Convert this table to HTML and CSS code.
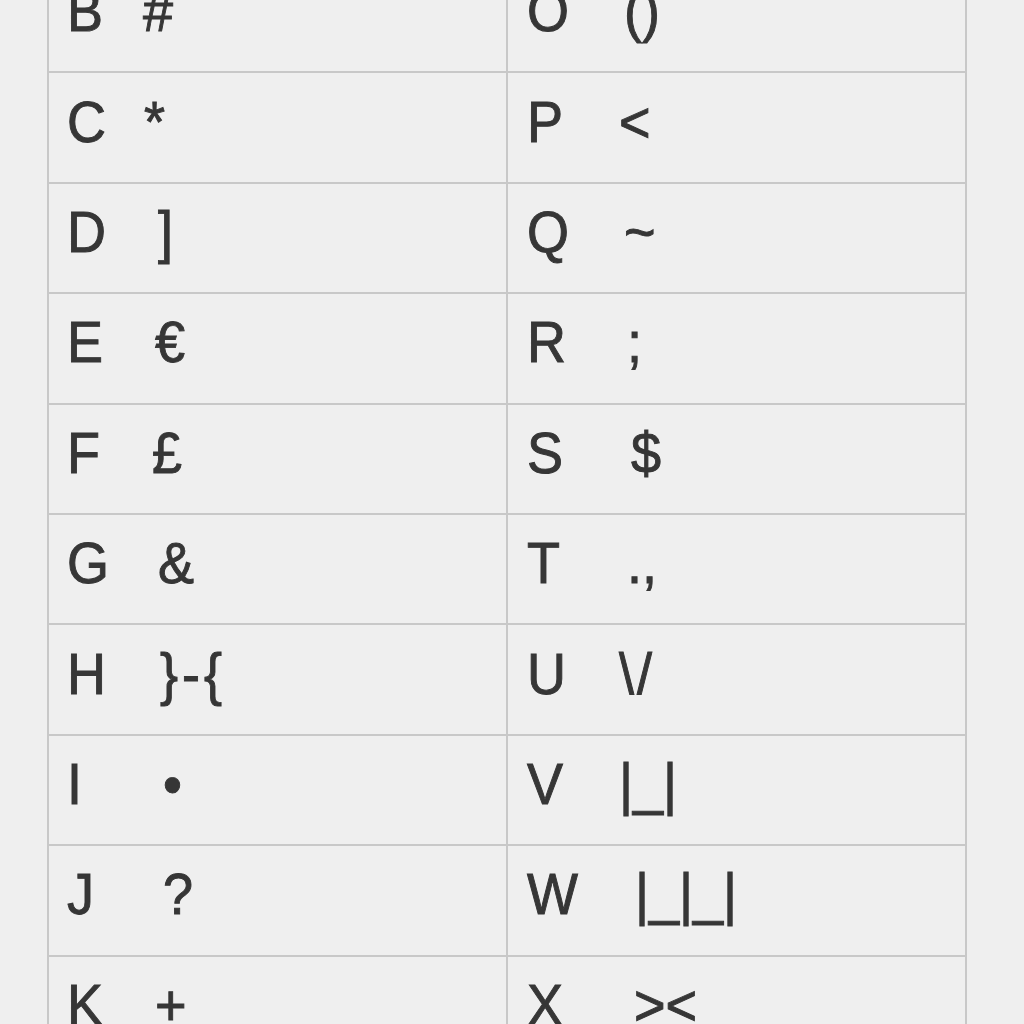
FILE: index.html
```html
<!DOCTYPE html>
<html>
<head>
<meta charset="utf-8">
<link rel="stylesheet" href="styles.css">
</head>
<body>
<div class="page">
  <table class="chart">
    <tr><td><span class="c"><span class="l">B</span><span class="s m-12">#</span></span></td><td><span class="c"><span class="l">O</span><span class="s m5">()</span></span></td></tr>
    <tr><td><span class="c"><span class="l">C</span><span class="s m-11">*</span></span></td><td><span class="c"><span class="l">P</span><span class="s">&lt;</span></span></td></tr>
    <tr><td><span class="c"><span class="l">D</span><span class="s m3">]</span></span></td><td><span class="c"><span class="l">Q</span><span class="s m5">~</span></span></td></tr>
    <tr><td><span class="c"><span class="l">E</span><span class="s">€</span></span></td><td><span class="c"><span class="l">R</span><span class="s m8">;</span></span></td></tr>
    <tr><td><span class="c"><span class="l">F</span><span class="s m-3">£</span></span></td><td><span class="c"><span class="l">S</span><span class="s m12">$</span></span></td></tr>
    <tr><td><span class="c"><span class="l">G</span><span class="s m3">&amp;</span></span></td><td><span class="c"><span class="l">T</span><span class="s m8">.,</span></span></td></tr>
    <tr><td><span class="c"><span class="l">H</span><span class="s m5 wide">}-{</span></span></td><td><span class="c"><span class="l">U</span><span class="s wide2">\/</span></span></td></tr>
    <tr><td><span class="c"><span class="l">I</span><span class="s m8">•</span></span></td><td><span class="c"><span class="l">V</span><span class="s">|_|</span></span></td></tr>
    <tr><td><span class="c"><span class="l">J</span><span class="s m8">?</span></span></td><td><span class="c"><span class="l">W</span><span class="s m16">|_|_|</span></span></td></tr>
    <tr><td><span class="c"><span class="l">K</span><span class="s">+</span></span></td><td><span class="c"><span class="l">X</span><span class="s m15">&gt;&lt;</span></span></td></tr>
  </table>
</div>
</body>
</html>
```
FILE: styles.css
```css
html, body {
  margin: 0;
  padding: 0;
  background: #efefef;
  overflow: hidden;
}
.page {
  width: 1024px;
  height: 1024px;
  overflow: hidden;
  padding-left: 47px;
  box-sizing: border-box;
}
.chart {
  border-collapse: collapse;
  margin-top: -39px;
  font-family: "Liberation Sans", Arial, sans-serif;
  font-size: 54px;
  color: #363636;
  -webkit-text-stroke: 0.9px #363636;
}
.chart td {
  width: 459px;
  height: 110.4px;
  box-sizing: border-box;
  border: 2px solid #c8c8c8;
  padding: 0 0 12px 18px;
  vertical-align: middle;
  line-height: 1;
  white-space: pre;
}
.chart td + td {
  padding-left: 19px;
}
.c {
  display: inline-block;
  transform: scaleY(1.07);
  transform-origin: 50% 70%;
}
.l {
  display: inline-block;
  width: 88px;
}
.chart td + td .l {
  width: 92px;
}
.s { display: inline-block; }
.m-12 { margin-left: -12px; }
.m-11 { margin-left: -11px; }
.m-3 { margin-left: -3px; }
.m3 { margin-left: 3px; }
.m5 { margin-left: 5px; }
.m8 { margin-left: 8px; }
.m12 { margin-left: 12px; }
.m15 { margin-left: 15px; }
.m16 { margin-left: 16px; }
.wide { letter-spacing: 4px; }
.wide2 { letter-spacing: 3px; }
```
